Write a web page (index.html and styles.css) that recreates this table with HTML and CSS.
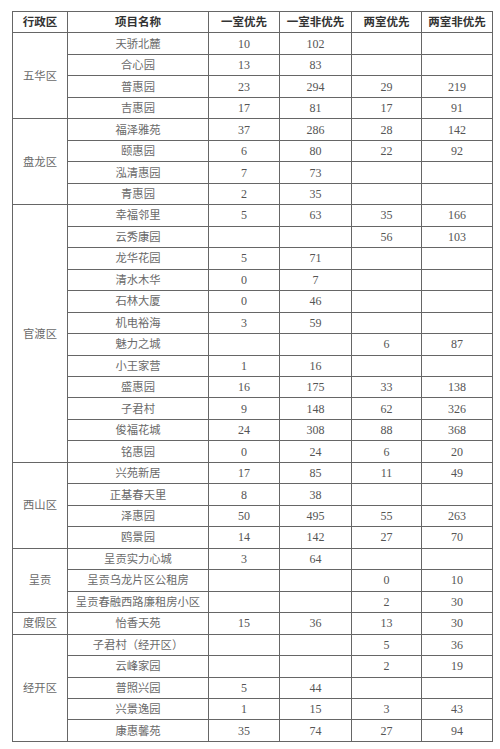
FILE: index.html
```html
<!DOCTYPE html>
<html lang="zh">
<head>
<meta charset="utf-8">
<link rel="stylesheet" href="styles.css">
</head>
<body>
<table class="grid">
<colgroup>
<col class="c-dist"><col class="c-name"><col class="c-num1"><col class="c-num2"><col class="c-num3"><col class="c-num4">
</colgroup>
<thead>
<tr><th>行政区</th><th>项目名称</th><th>一室优先</th><th>一室非优先</th><th>两室优先</th><th>两室非优先</th></tr>
</thead>
<tbody>
<tr><td rowspan="4" class="dist">五华区</td><td class="name">天骄北麓</td><td>10</td><td>102</td><td></td><td></td></tr>
<tr><td class="name">合心园</td><td>13</td><td>83</td><td></td><td></td></tr>
<tr><td class="name">普惠园</td><td>23</td><td>294</td><td>29</td><td>219</td></tr>
<tr><td class="name">吉惠园</td><td>17</td><td>81</td><td>17</td><td>91</td></tr>

<tr><td rowspan="4" class="dist">盘龙区</td><td class="name">福泽雅苑</td><td>37</td><td>286</td><td>28</td><td>142</td></tr>
<tr><td class="name">颐惠园</td><td>6</td><td>80</td><td>22</td><td>92</td></tr>
<tr><td class="name">泓清惠园</td><td>7</td><td>73</td><td></td><td></td></tr>
<tr><td class="name">青惠园</td><td>2</td><td>35</td><td></td><td></td></tr>

<tr><td rowspan="12" class="dist">官渡区</td><td class="name">幸福邻里</td><td>5</td><td>63</td><td>35</td><td>166</td></tr>
<tr><td class="name">云秀康园</td><td></td><td></td><td>56</td><td>103</td></tr>
<tr><td class="name">龙华花园</td><td>5</td><td>71</td><td></td><td></td></tr>
<tr><td class="name">清水木华</td><td>0</td><td>7</td><td></td><td></td></tr>
<tr><td class="name">石林大厦</td><td>0</td><td>46</td><td></td><td></td></tr>
<tr><td class="name">机电裕海</td><td>3</td><td>59</td><td></td><td></td></tr>
<tr><td class="name">魅力之城</td><td></td><td></td><td>6</td><td>87</td></tr>
<tr><td class="name">小王家营</td><td>1</td><td>16</td><td></td><td></td></tr>
<tr><td class="name">盛惠园</td><td>16</td><td>175</td><td>33</td><td>138</td></tr>
<tr><td class="name">子君村</td><td>9</td><td>148</td><td>62</td><td>326</td></tr>
<tr><td class="name">俊福花城</td><td>24</td><td>308</td><td>88</td><td>368</td></tr>
<tr><td class="name">铭惠园</td><td>0</td><td>24</td><td>6</td><td>20</td></tr>

<tr><td rowspan="4" class="dist">西山区</td><td class="name">兴苑新居</td><td>17</td><td>85</td><td>11</td><td>49</td></tr>
<tr><td class="name">正基春天里</td><td>8</td><td>38</td><td></td><td></td></tr>
<tr><td class="name">泽惠园</td><td>50</td><td>495</td><td>55</td><td>263</td></tr>
<tr><td class="name">鸥景园</td><td>14</td><td>142</td><td>27</td><td>70</td></tr>

<tr><td rowspan="3" class="dist">呈贡</td><td class="name">呈贡实力心城</td><td>3</td><td>64</td><td></td><td></td></tr>
<tr><td class="name">呈贡乌龙片区公租房</td><td></td><td></td><td>0</td><td>10</td></tr>
<tr><td class="name">呈贡春融西路廉租房小区</td><td></td><td></td><td>2</td><td>30</td></tr>

<tr><td class="dist">度假区</td><td class="name">怡香天苑</td><td>15</td><td>36</td><td>13</td><td>30</td></tr>

<tr><td rowspan="5" class="dist">经开区</td><td class="name">子君村（经开区）</td><td></td><td></td><td>5</td><td>36</td></tr>
<tr><td class="name">云峰家园</td><td></td><td></td><td>2</td><td>19</td></tr>
<tr><td class="name">普照兴园</td><td>5</td><td>44</td><td></td><td></td></tr>
<tr><td class="name">兴景逸园</td><td>1</td><td>15</td><td>3</td><td>43</td></tr>
<tr><td class="name">康惠馨苑</td><td>35</td><td>74</td><td>27</td><td>94</td></tr>
</tbody>
</table>
</body>
</html>
```

FILE: styles.css
```css
html, body {
  margin: 0;
  padding: 0;
  background: #ffffff;
}
body {
  padding: 11px 0 0 12px;
}
.grid {
  border-collapse: collapse;
  width: 481px;
  table-layout: fixed;
  font-family: "Liberation Serif", "Noto Sans CJK SC", serif;
  font-size: 12px;
  color: #555;
}
.c-dist { width: 55px; }
.c-name { width: 141px; }
.c-num1 { width: 71px; }
.c-num2 { width: 72px; }
.c-num3 { width: 70px; }
.c-num4 { width: 71px; }
.grid th,
.grid td {
  border: 1px solid #666;
  height: 20.47px;
  padding: 0;
  text-align: center;
  vertical-align: middle;
  line-height: 14px;
  white-space: nowrap;
}
.grid th {
  font-weight: bold;
  font-size: 11.5px;
  color: #333;
}
.grid td.dist,
.grid td.name {
  font-size: 11.3px;
  color: #6a6a6a;
}
```
